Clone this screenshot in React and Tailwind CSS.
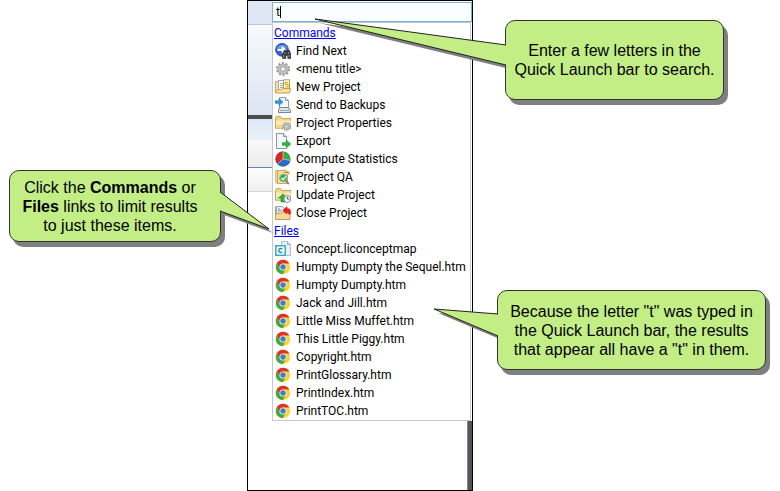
import React from "react";

function Folder() {
  return (
    <>
      <path d="M.5 13.5V2.5l1-1h4l1.5 2h9v10z" fill="#efd48c" stroke="#c9a75c" />
      <path d="M1 13V5.500h14.500V13z" fill="#fdeab4" />
      <path d="M1 13.500V10h14.500v3.500z" fill="#f3d68e" />
    </>
  );
}

function Page() {
  return (
    <>
      <path d="M1.500.5h7l3 3v12h-10z" fill="#f4f7fa" stroke="#8797a8" />
      <path d="M8.500.5v3h3" fill="#d5dfe8" stroke="#8797a8" />
    </>
  );
}

function Gear({ x, y, r }) {
  return (
    <g transform={`translate(${x} ${y})`}>
      <circle r={r * 0.85} fill="none" stroke="#9a9a9a" strokeWidth={r * 0.3} strokeDasharray={`${r * 0.3} ${r * 0.234}`} />
      <circle r={r * 0.58} fill="#fff" stroke="#a9a9a9" strokeWidth={r * 0.44} />
      <circle r={r * 0.56} fill="none" stroke="#c6c6c6" strokeWidth={r * 0.2} />
      <circle r={r * 0.3} fill="#fff" stroke="#8c8c8c" strokeWidth=".7" />
    </g>
  );
}

const drawings = {
  find: (
    <>
      <circle cx="7" cy="6.8" r="6.400" fill="#2f63cf" stroke="#1d3f91" strokeWidth=".8" />
      <path d="M1.600 5.500a5.600 4.700 0 0 1 10.800 0z" fill="#6a98ea" />
      <path d="M2.500 5.700h4.200V2.800l4.600 4-4.600 4V8H2.500z" fill="#fff" />
      <path d="M7.500 15.500v-4l1.500-4h2l.8 2 .8-2h2l1.200 4v4h-3v-3h-2v3z" fill="#40403e" stroke="#222" strokeWidth=".6" />
      <path d="M8.700 12v2.500M14 12v2.500M9.700 9v1.500M13.500 9v1.500" stroke="#a19d93" strokeWidth=".9" />
    </>
  ),
  gear: <Gear x={8} y={8} r={7} />,
  newProject: (
    <>
      <path d="M.5 13V2.500h3.500l1 1.500" fill="#f7e0a2" stroke="#c9a75c" />
      <path d="M3.500 1.500h6v10h-6z" fill="#fff" stroke="#9aa7b3" />
      <path d="M5 4.500h3M5 6.500h3M5 8.500h3" stroke="#96aec5" />
      <path d="M8.500.8h6v9.700h-6z" fill="#fffbe2" stroke="#b79c4d" />
      <path d="M13 3.500h-2.500v2H13v2.500h-2.800" fill="none" stroke="#dfa500" strokeWidth="1.200" />
      <path d="M.5 14L2.500 10.500h4l1-1h8l-1 4.500z" fill="#fae2a0" stroke="#c39f50" />
    </>
  ),
  backup: (
    <>
      <path d="M4.500.5h6l3 3v9h-9z" fill="#f2f6fa" stroke="#8b9cab" />
      <path d="M10.500.5v3h3" fill="#d3dfe9" stroke="#8b9cab" />
      <path d="M0 3.800h4V1.500L8 5 4 8.500V6.200H0z" fill="#2e9be0" stroke="#1673b6" strokeWidth=".6" />
      <path d="M4.500 10.500h9l2 3v2h-12v-2z" fill="#e0e5ea" stroke="#77848f" />
      <path d="M5 13.500h7" stroke="#9aa6b1" />
      <path d="M12.500 13.500h1.500" stroke="#2aa83a" />
    </>
  ),
  properties: (
    <>
      <Folder />
      <Gear x={11.5} y={11.5} r={4.4} />
    </>
  ),
  exportPage: (
    <>
      <Page />
      <path d="M7.500 9.700h4V7.200l4.300 3.800-4.300 3.800v-2.500h-4z" fill="#31ba45" stroke="#158a2a" strokeWidth=".6" />
    </>
  ),
  pie: (
    <>
      <circle cx="8" cy="8" r="7.500" fill="#39ad42" />
      <path d="M8 8V.5A7.500 7.500 0 0 0 2.500 13z" fill="#dc2429" />
      <path d="M8 8L2.500 13A7.500 7.500 0 0 0 15.300 9.500z" fill="#2b6cc9" />
      <path d="M8 .5V8l7.400 1.500M8 8l-5.500 5" stroke="#e5efe9" strokeWidth=".6" fill="none" />
      <circle cx="8" cy="8" r="7.300" fill="none" stroke="#33465a" strokeOpacity=".35" strokeWidth=".6" />
    </>
  ),
  qa: (
    <>
      <path d="M.8 13.500v-12h1.700v13z" fill="#f9e6b0" stroke="#c9a75c" />
      <path d="M2.500 1.500h7V.8L14.500 3.500l-2 2.500v8.500h-10z" fill="#f6dc98" stroke="#c9a75c" />
      <path d="M9 3.500h4.500" stroke="#c88a27" />
      <circle cx="8.500" cy="9" r="3.900" fill="#2fb047" stroke="#a5bbae" />
      <path d="M6.500 9l1.600 1.700L11 7.300" stroke="#fff" strokeWidth="1.300" fill="none" />
      <path d="M11.200 12l2.600 3" stroke="#777" strokeWidth="1.600" />
    </>
  ),
  update: (
    <>
      <Folder />
      <path d="M6 15V11H3.700L8 6.800l4 4.200h-2v4z" fill="#27b83d" stroke="#128427" strokeWidth=".6" />
      <circle cx="12.300" cy="12" r="3.400" fill="#f5f7f8" stroke="#77828b" strokeWidth=".9" />
      <path d="M12.300 9.800V12h2" stroke="#444" fill="none" strokeWidth=".9" />
    </>
  ),
  close: (
    <>
      <path d="M.5 14V1.500h2" fill="none" stroke="#c9a75c" />
      <path d="M1.500 1.500h6l2 2v6h-8z" fill="#e6ecf0" stroke="#9aa7a8" />
      <path d="M3 4h2M3 6h4" stroke="#7390aa" />
      <path d="M.5 14.500v-6h6l1-1h7.500v7z" fill="#f7d8a0" stroke="#c4975a" />
      <path d="M15.500 9h-2V6.800H12V9L7.800 5.300 12 1.500v2.300h2l1.500 1.500z" fill="#ed1c14" stroke="#cf0c08" strokeWidth=".5" />
    </>
  ),
  concept: (
    <>
      <path d="M6.500.5h6l3 3v11h-9z" fill="#e9eef3" stroke="#b3bdc8" />
      <path d="M12.500.5v3h3" fill="#cbd7e1" stroke="#a3afbb" />
      <path d="M.8 4.800h9.400v9.400H.8z" fill="#fff" stroke="#35adc4" strokeWidth="1.500" />
      <path d="M7.300 8.200a2 2 0 1 0 0 2.600" fill="none" stroke="#188ba6" strokeWidth="1.300" />
    </>
  ),
  chrome: (
    <>
      <circle cx="8" cy="8" r="7.200" fill="#f9d52c" />
      <path d="M8 4.500h6.300A7.200 7.200 0 0 0 1.800 4.300L5 9.800z" fill="#de3427" />
      <path d="M1.800 4.300A7.200 7.200 0 0 0 7.600 15.200L11 9.800 8 11.500 5 9.800z" fill="#42a744" />
      <circle cx="8" cy="8" r="3.500" fill="#f5f5f0" />
      <circle cx="8" cy="8" r="2.700" fill="#3f7fca" />
    </>
  ),
};

const commands = [
  ["find", "Find Next"],
  ["gear", "<menu title>"],
  ["newProject", "New Project"],
  ["backup", "Send to Backups"],
  ["properties", "Project Properties"],
  ["exportPage", "Export"],
  ["pie", "Compute Statistics"],
  ["qa", "Project QA"],
  ["update", "Update Project"],
  ["close", "Close Project"],
];

const files = [
  ["concept", "Concept.liconceptmap"],
  ["chrome", "Humpty Dumpty the Sequel.htm"],
  ["chrome", "Humpty Dumpty.htm"],
  ["chrome", "Jack and Jill.htm"],
  ["chrome", "Little Miss Muffet.htm"],
  ["chrome", "This Little Piggy.htm"],
  ["chrome", "Copyright.htm"],
  ["chrome", "PrintGlossary.htm"],
  ["chrome", "PrintIndex.htm"],
  ["chrome", "PrintTOC.htm"],
];

function ResultGroup({ title, items }) {
  return (
    <section>
      <a href={"#" + title.toLowerCase()} className="block h-[18px] pl-px leading-[18px] text-[#0000ff] underline">
        {title}
      </a>
      <ul>
        {items.map(([icon, label]) => (
          <li key={label}>
            <button type="button" className="flex h-[18px] w-full items-center gap-[5px] pl-[2px] text-left leading-[18px] whitespace-nowrap">
              <svg viewBox="0 0 16 16" className="size-4 shrink-0" aria-hidden="true">
                {drawings[icon]}
              </svg>
              {label}
            </button>
          </li>
        ))}
      </ul>
    </section>
  );
}

function RibbonEdge() {
  return (
    <div className="flex w-6 shrink-0 flex-col">
      <div className="h-[23px] bg-[#dfe7f4]" />
      <div className="h-[91px] border-t border-[#b9c9e0] bg-linear-to-b from-[#f7f9fc] to-[#dde5f3]" />
      <div className="h-1 bg-[#4d4d4d]" />
      <div className="h-[21px] bg-linear-to-b from-[#dce8f6] to-[#e9f2fb]" />
      <div className="h-[28px] border-b border-[#5f86b5] bg-linear-to-b from-[#fafafa] to-[#ebebeb]" />
      <div className="h-6 border-b border-[#d5d5d5] bg-linear-to-b from-[#fdfdfd] to-[#f0f0f0]" />
    </div>
  );
}

function QuickLaunch() {
  return (
    <main className="flex min-h-screen border border-black bg-white font-[Roboto,'Open_Sans',sans-serif] text-[12px] text-black">
      <RibbonEdge />
      <div className="flex min-w-0 grow flex-col">
        <div className="relative mt-px">
          <input
            type="text"
            aria-label="Quick Launch"
            defaultValue="t"
            className="block h-5 w-full border border-[#7eb0dc] bg-[#fbfefe] px-[3px] leading-[18px] outline-none"
          />
          <span className="absolute top-1 left-2 h-3 w-px bg-black" />
        </div>
        <div className="mr-px border border-[#c8c8c8] pt-px">
          <ResultGroup title="Commands" items={commands} />
          <ResultGroup title="Files" items={files} />
        </div>
        <div className="flex grow justify-end">
          <div className="w-[5px] border-l border-[#6f8fb3] bg-[#555]" />
        </div>
      </div>
    </main>
  );
}

function Callout({ className, tail, children }) {
  const path = tail.map((p) => p.join(" ")).join(" L");
  return (
    <aside
      className={"relative z-10 flex items-center justify-center text-center text-[16px] leading-[19px] whitespace-nowrap " + className}
    >
      <svg className="absolute top-0 left-0 size-px overflow-visible" aria-hidden="true">
        <path d={`M${path}Z`} transform="translate(4 4)" fill="#7f7f7f" />
      </svg>
      <div className="absolute inset-0 rounded-[10px] border border-[#333] bg-[#c3ee86] shadow-[4px_5px_0_#7f7f7f]" />
      <svg className="absolute top-0 left-0 size-px overflow-visible" aria-hidden="true">
        <path d={`M${path}Z`} fill="#c3ee86" />
        <path d={`M${path}`} fill="none" stroke="#222" />
      </svg>
      <p className="relative">{children}</p>
    </aside>
  );
}

export default function App() {
  return (
    <div className="grid grid-cols-[247px_226px_1fr] bg-white font-['Liberation_Sans',Arial,sans-serif] text-black">
      <div className="px-[9px] pt-[170px]">
        <Callout className="h-[72px] w-[212px] pr-[10px]" tail={[[211, 22], [260, 59], [211, 41]]}>
          Click the <b>Commands</b> or
          <br />
          <b>Files</b> links to limit results
          <br />
          to just these items.
        </Callout>
      </div>
      <QuickLaunch />
      <div className="flex flex-col gap-[190px] pt-5">
        <Callout className="ml-8 h-20 w-[219px]" tail={[[1, 25], [-190, -1], [1, 45]]}>
          Enter a few letters in the
          <br />
          Quick Launch bar to search.
        </Callout>
        <Callout className="ml-6 h-20 w-[269px]" tail={[[1, 24], [-63, 19], [1, 46]]}>
          Because the letter "t" was typed in
          <br />
          the Quick Launch bar, the results
          <br />
          that appear all have a "t" in them.
        </Callout>
      </div>
    </div>
  );
}
